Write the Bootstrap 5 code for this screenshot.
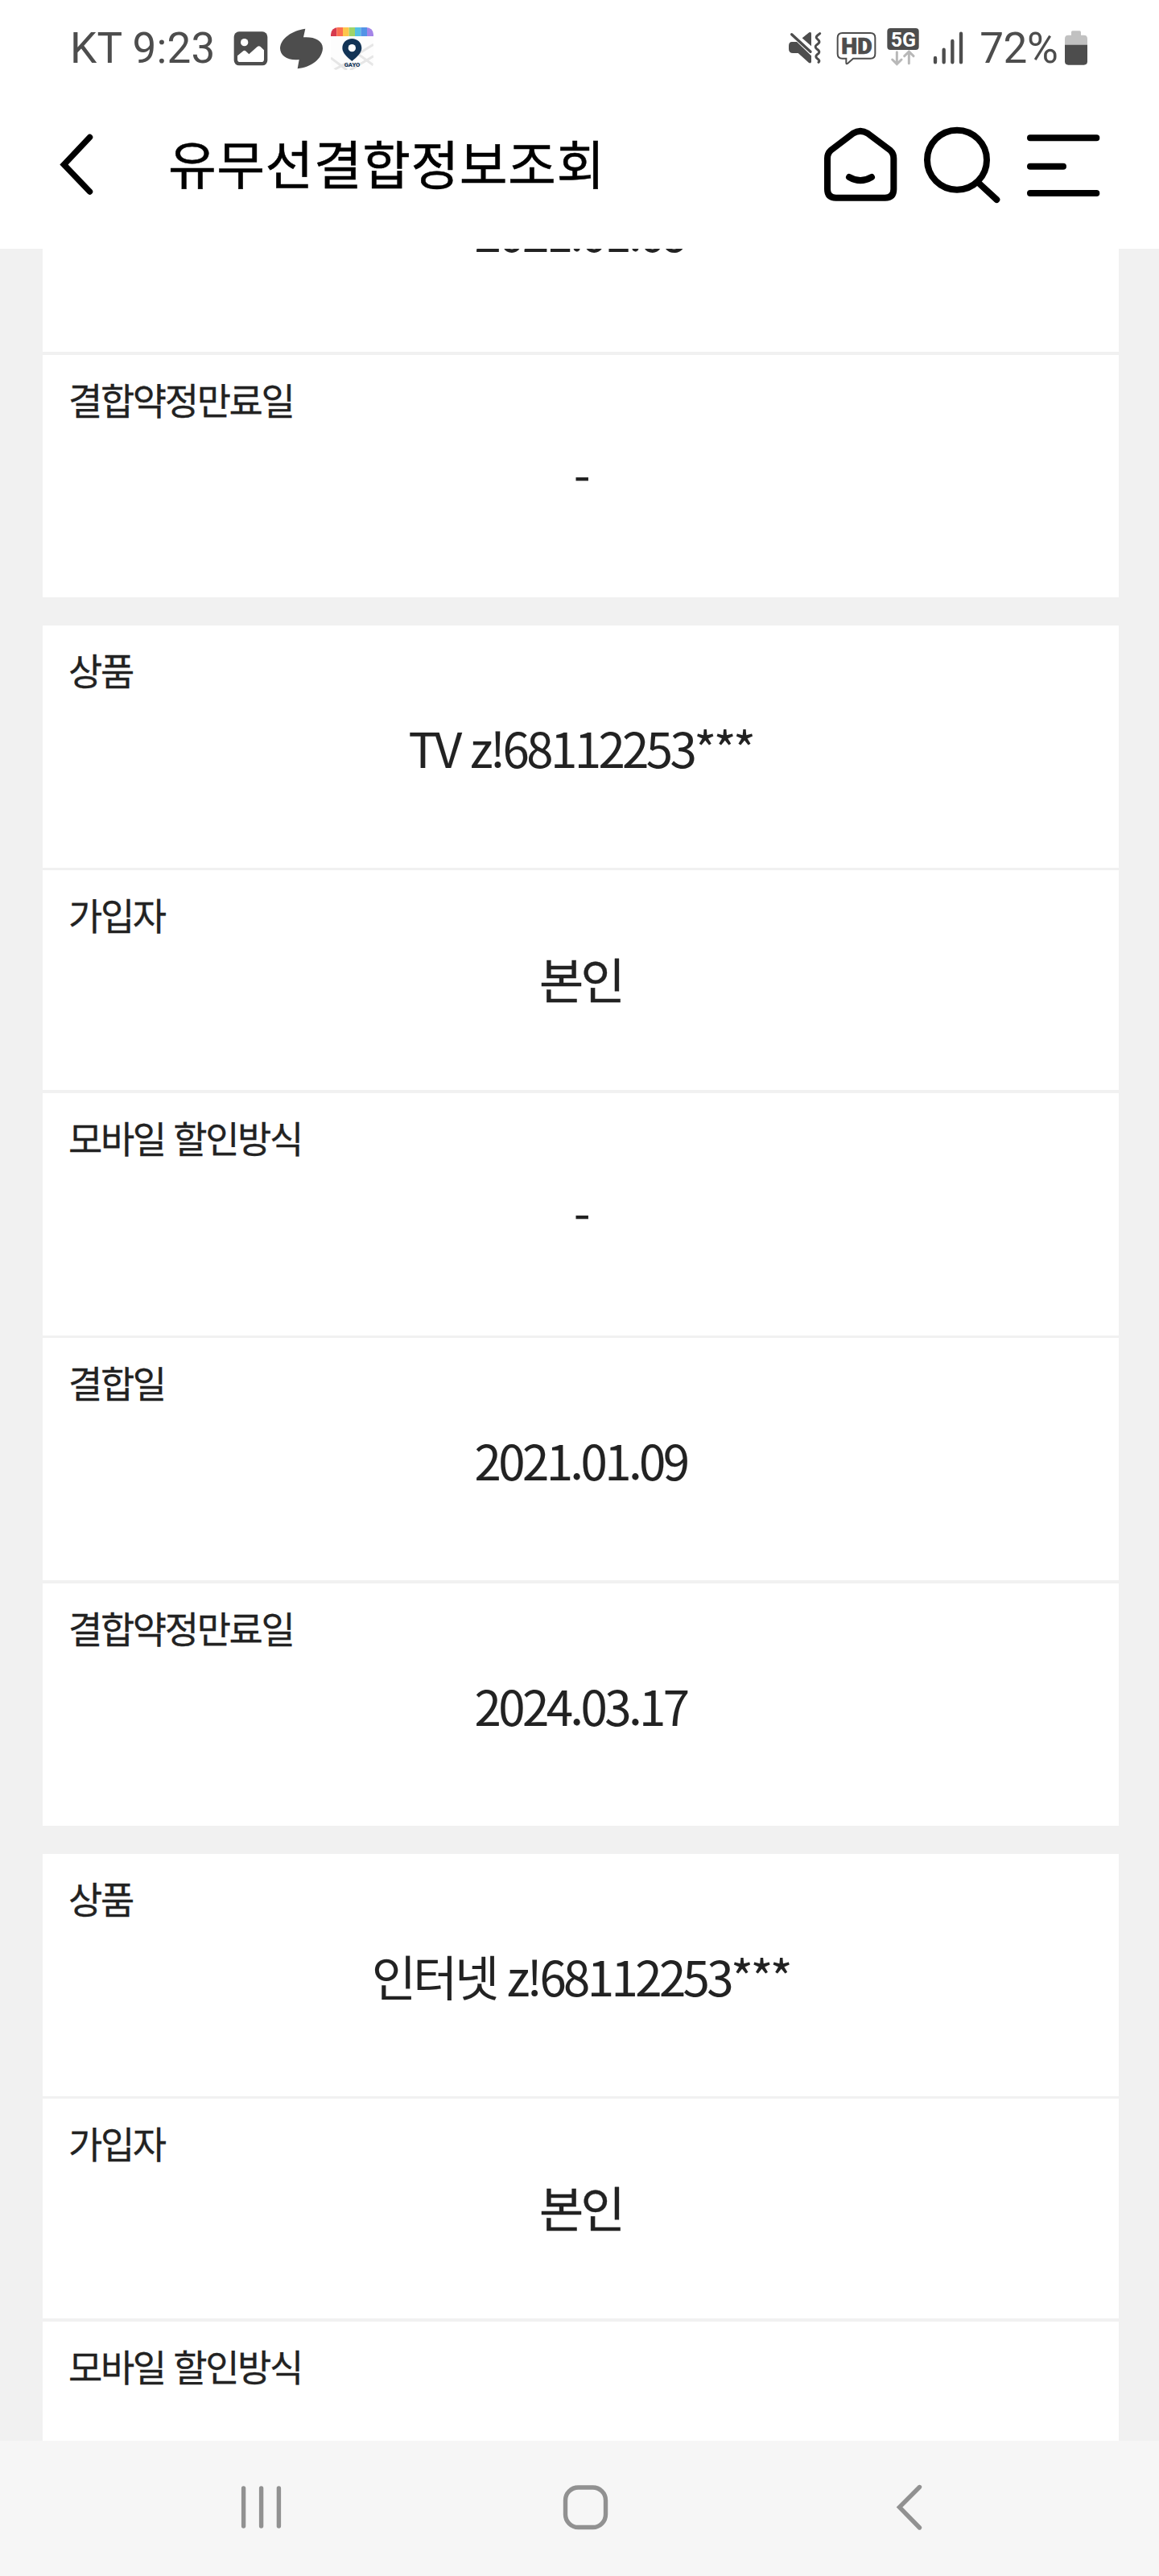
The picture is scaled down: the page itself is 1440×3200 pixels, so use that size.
<!DOCTYPE html>
<html lang="ko">
<head>
<meta charset="utf-8">
<meta name="viewport" content="width=device-width, initial-scale=1">
<title>유무선결합정보조회</title>
<link href="https://cdn.jsdelivr.net/npm/bootstrap@5.3.0/dist/css/bootstrap.min.css" rel="stylesheet">
<style>
body{background:#f1f1f1;font-family:"Noto Sans CJK KR",sans-serif;color:#222;width:1440px;height:3200px;overflow:hidden}
svg{display:block;flex:none}
.status-bar{height:120px;color:#4d4d4d;font-family:Roboto,sans-serif;font-size:53px;line-height:122px;padding:0 89px 0 87px}
.carrier{width:201px;white-space:nowrap;letter-spacing:.2px}
.battery-pct{width:112.7px;padding-left:7px;letter-spacing:-.5px;white-space:nowrap}
.app-bar{height:189px;color:#000;padding:0 70px 22px 70px}
.app-title{font-size:65px;line-height:90px;letter-spacing:.5px;font-weight:400;margin:0 0 5px 89px;-webkit-text-stroke:.5px #000}
.page-body{height:2723px;overflow:hidden;padding:0 50px 0 53px}
.info-card{background:#fff;margin-bottom:35px}
.card-scrolled{margin-top:-173px}
.info-row{border-bottom:3px solid #f1f1f1;height:304px;padding:21px 32px 0}
.info-row:nth-child(even),.card-scrolled .info-row{border-bottom-width:4px}
.info-row.row-short{height:277px}
.info-row.row-tall{height:305px}
.info-card .info-row:nth-child(5),.card-scrolled .info-row:last-child{border-bottom:0;height:301px}
.info-label{font-size:46px;line-height:66px;letter-spacing:-2.4px;-webkit-text-stroke:.3px #222}
.info-value{font-size:60px;line-height:80px;letter-spacing:-3.6px;margin-top:24px;text-align:center;-webkit-text-stroke:.1px #222}
.row-short .info-value{margin-top:7px;-webkit-text-stroke-width:.4px}
.nav-soft{height:168px;background:#f6f6f6;padding:0 291px 2px 297px}
.nav-home{margin-right:10px}
</style>
</head>
<body>
<header class="bg-white">
<div class="status-bar d-flex align-items-center">
<span class="carrier">KT 9:23</span>
<svg width="190" height="100" viewBox="684 0 570 300" aria-hidden="true">
<rect x="692" y="88" width="125" height="126" rx="19" fill="#4d4d4d"/>
<circle cx="731" cy="128" r="14" fill="#fff"/>
<path d="M705 178l20-17q6-5 12 0l11 11 31-28q6-5 12 0l13 13v34q0 10-10 10h-79q-10 0-10-10z" fill="#fff"/>
<path d="M958 77L951 109C990 106 1023 120 1023 150C1021 190 980 220 929 226L935 192C894 197 864 178 864 149C866 113 908 84 958 77Z" fill="#4d4d4d"/>
<clipPath id="appClip"><rect x="1053" y="72" width="159" height="159" rx="26"/></clipPath>
<g clip-path="url(#appClip)">
<rect x="1053" y="72" width="159" height="159" fill="#fdfdfd"/>
<path d="M1053 186l60 45M1063 231l45-24M1140 180l72-44M1150 168l62 45M1125 231l87-52" stroke="#e6e6e6" stroke-width="9" fill="none"/>
<rect x="1053" y="72" width="22" height="33" fill="#d63a4e"/><rect x="1075" y="72" width="23" height="33" fill="#fc6e51"/><rect x="1098" y="72" width="23" height="33" fill="#fdc64b"/><rect x="1121" y="72" width="22" height="33" fill="#9fd468"/><rect x="1143" y="72" width="22" height="33" fill="#54c0e4"/><rect x="1165" y="72" width="23" height="33" fill="#5393e6"/><rect x="1188" y="72" width="24" height="33" fill="#a485e8"/>
</g>
<path d="M1132 114c-20 0-36 15-36 35 0 18 18 33 36 49 18-16 36-31 36-49 0-20-16-35-36-35z" fill="#123456"/>
<circle cx="1132" cy="149" r="14" fill="#fff"/>
<text x="1103" y="219" font-family="Roboto" font-weight="900" font-size="21" textLength="59" lengthAdjust="spacingAndGlyphs" fill="#123456">GAYO</text>
</svg>
<div class="d-flex align-items-center ms-auto">
<svg width="250" height="100" viewBox="0 0 750 300" fill="none" stroke-linecap="round" aria-hidden="true">
<path d="M72 126h18l54 52v23q-2 7-9 3l-40-36H76q-16 0-16-15v-12q0-15 12-15zM110 112l26-21q8-4 8 4v47z" fill="#4d4d4d"/>
<path d="M71 98l70 65" stroke="#4d4d4d" stroke-width="10"/>
<path d="M176 95l-9 7q-9 7 0 14 9 7 6 13-3 4-9 8-9 7 0 15 14 9 7 17l-5 4q-9 8 0 15 12 8 5 14" stroke="#4d4d4d" stroke-width="9"/>
<path d="M260 93h104q18 0 18 18v59q0 18-18 18h-64l-21 19q-5 3-5-4v-15h-14q-18 0-18-18v-59q0-18 18-18z" stroke="#4d4d4d" stroke-width="6"/>
<text x="256" y="171" font-family="Roboto" font-weight="900" font-size="83" textLength="115" lengthAdjust="spacingAndGlyphs" fill="#4d4d4d" stroke="#4d4d4d" stroke-width="2">HD</text>
<rect x="427" y="75" width="118" height="81" rx="12" fill="#4d4d4d"/>
<text x="440" y="143" font-family="Roboto" font-weight="700" font-size="79" textLength="94" lengthAdjust="spacingAndGlyphs" fill="#fff">5G</text>
<path d="M463 164v44M446 192l17 17 17-17M508 206v-43M491 179l17-17 17 17" stroke="#b8b8b8" stroke-width="9"/>
<path d="M606 186v16M638 155v47M670 123v79M702 95v107" stroke="#4d4d4d" stroke-width="13"/>
</svg>
<span class="battery-pct">72%</span>
<svg width="28" height="100" viewBox="1088 0 84 300" aria-hidden="true">
<path d="M1112 90q0-5 5-5h26q5 0 5 5v11h11q13 0 13 13v24h-84v-24q0-13 13-13h11z" fill="#c1c1c1"/>
<path d="M1088 137h84v62q0 13-13 13h-58q-13 0-13-13z" fill="#4d4d4d"/>
</svg>
</div>
</div>
<div class="app-bar d-flex align-items-center">
<svg width="50" height="90" viewBox="0 0 50 90" fill="none" stroke="#000" stroke-width="7.5" stroke-linecap="round" aria-hidden="true"><path d="M41.500 11.500L9.500 45.500 41.500 79"/></svg>
<h1 class="app-title">유무선결합정보조회</h1>
<svg class="ms-auto" width="350" height="100" viewBox="120 70 1050 300" fill="none" stroke="#000" stroke-width="24" stroke-linecap="round" stroke-linejoin="round" aria-hidden="true">
<path d="M240 105q27-17 54 0l84 63q13 12 13 30v115q0 32-32 32H176q-32 0-32-32V198q0-18 13-30z"/>
<path d="M225 268q42 25 84 0"/>
<circle cx="627" cy="204" r="111"/>
<path d="M708 290l67 62M900 122h247M900 228h123M900 328h247"/>
</svg>
</div>
</header>
<main class="page-body">
<section class="info-card card-scrolled">
<div class="info-row row-tall"><div class="info-label">결합일</div><div class="info-value">2021.01.09</div></div>
<div class="info-row"><div class="info-label">결합약정만료일</div><div class="info-value">-</div></div>
</section>
<section class="info-card">
<div class="info-row"><div class="info-label">상품</div><div class="info-value">TV z!68112253***</div></div>
<div class="info-row row-short"><div class="info-label">가입자</div><div class="info-value">본인</div></div>
<div class="info-row"><div class="info-label">모바일 할인방식</div><div class="info-value">-</div></div>
<div class="info-row row-tall"><div class="info-label">결합일</div><div class="info-value">2021.01.09</div></div>
<div class="info-row"><div class="info-label">결합약정만료일</div><div class="info-value">2024.03.17</div></div>
</section>
<section class="info-card">
<div class="info-row"><div class="info-label">상품</div><div class="info-value">인터넷 z!68112253***</div></div>
<div class="info-row row-short"><div class="info-label">가입자</div><div class="info-value">본인</div></div>
<div class="info-row"><div class="info-label">모바일 할인방식</div></div>
</section>
</main>
<nav class="nav-soft d-flex align-items-center justify-content-between">
<svg width="56" height="66" viewBox="297 3082 56 66" stroke="#919191" stroke-width="5.4" stroke-linecap="round" aria-hidden="true"><path d="M302.600 3091v47M324.600 3091v47M346.400 3091v47"/></svg>
<svg class="nav-home" width="62" height="66" viewBox="695 3082 62 66" fill="none" stroke="#919191" stroke-width="5.4" aria-hidden="true"><rect x="701.500" y="3090" width="50" height="49.500" rx="16"/></svg>
<svg width="38" height="66" viewBox="1111 3082 38 66" fill="none" stroke="#919191" stroke-width="5.400" stroke-linecap="round" aria-hidden="true"><path d="M1142.500 3089.500l-25 25 25 25.500"/></svg>
</nav>
<script src="https://cdn.jsdelivr.net/npm/bootstrap@5.3.0/dist/js/bootstrap.bundle.min.js"></script>
</body>
</html>
